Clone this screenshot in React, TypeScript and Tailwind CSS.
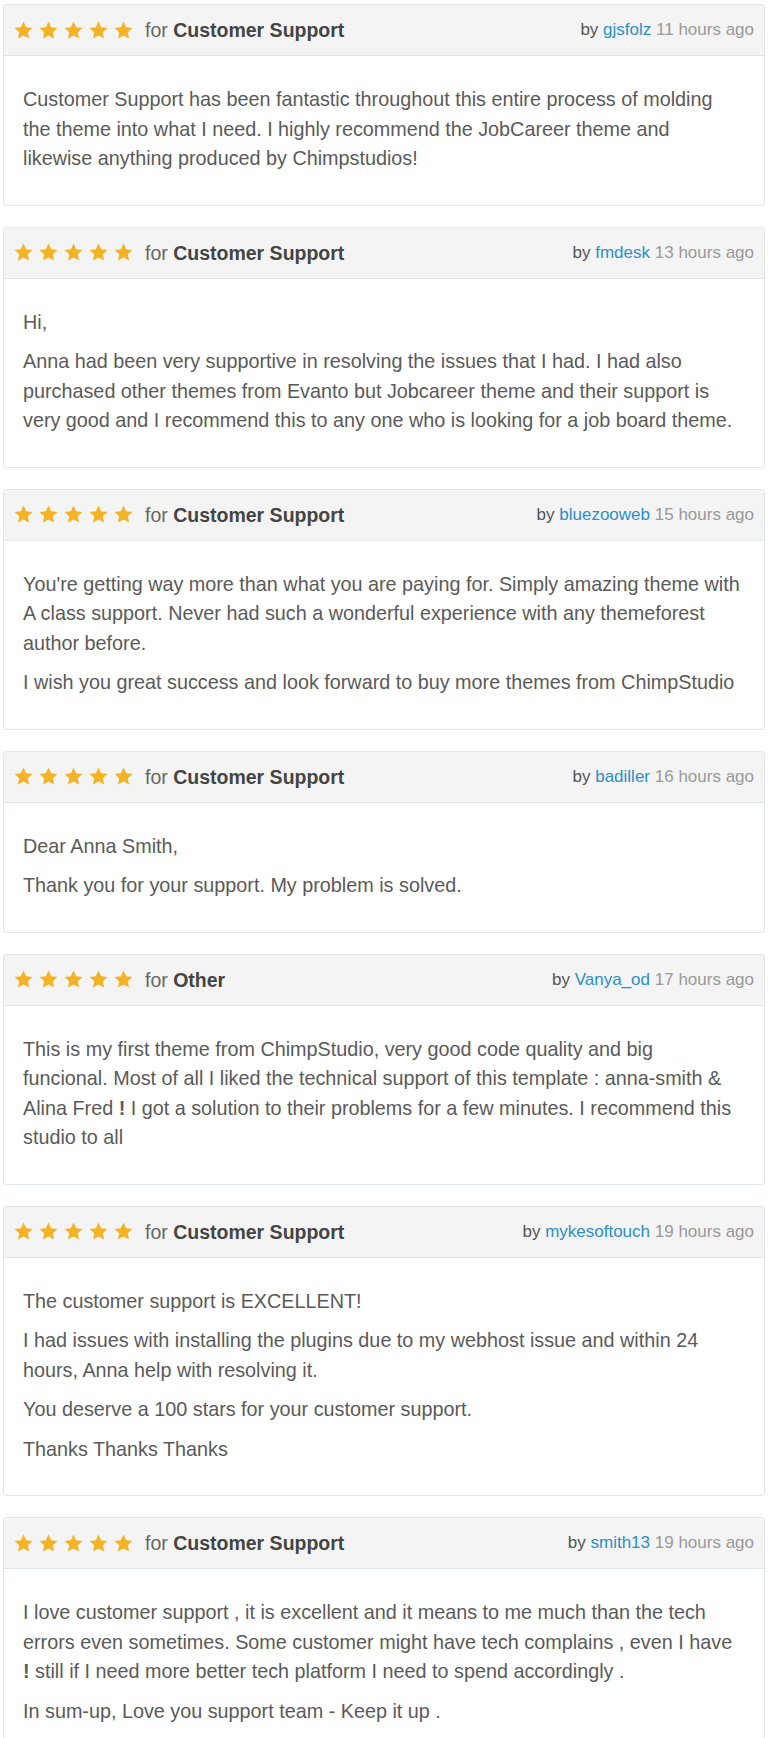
import { ReactNode } from "react"

interface Review {
  category: string
  author: string
  time: string
  body: ReactNode[]
}

const reviews: Review[] = [
  {
    category: "Customer Support",
    author: "gjsfolz",
    time: "11 hours ago",
    body: [
      "Customer Support has been fantastic throughout this entire process of molding the theme into what I need. I highly recommend the JobCareer theme and likewise anything produced by Chimpstudios!",
    ],
  },
  {
    category: "Customer Support",
    author: "fmdesk",
    time: "13 hours ago",
    body: [
      "Hi,",
      "Anna had been very supportive in resolving the issues that I had. I had also purchased other themes from Evanto but Jobcareer theme and their support is very good and I recommend this to any one who is looking for a job board theme.",
    ],
  },
  {
    category: "Customer Support",
    author: "bluezooweb",
    time: "15 hours ago",
    body: [
      "You're getting way more than what you are paying for. Simply amazing theme with A class support. Never had such a wonderful experience with any themeforest author before.",
      "I wish you great success and look forward to buy more themes from ChimpStudio",
    ],
  },
  {
    category: "Customer Support",
    author: "badiller",
    time: "16 hours ago",
    body: ["Dear Anna Smith,", "Thank you for your support. My problem is solved."],
  },
  {
    category: "Other",
    author: "Vanya_od",
    time: "17 hours ago",
    body: [
      <>
        This is my first theme from ChimpStudio, very good code quality and big funcional.
        Most of all I liked the technical support of this template : anna-smith &amp; Alina
        Fred <b className="font-bold">!</b> I got a solution to their problems for a few
        minutes. I recommend this studio to all
      </>,
    ],
  },
  {
    category: "Customer Support",
    author: "mykesoftouch",
    time: "19 hours ago",
    body: [
      "The customer support is EXCELLENT!",
      "I had issues with installing the plugins due to my webhost issue and within 24 hours, Anna help with resolving it.",
      "You deserve a 100 stars for your customer support.",
      "Thanks Thanks Thanks",
    ],
  },
  {
    category: "Customer Support",
    author: "smith13",
    time: "19 hours ago",
    body: [
      <>
        I love customer support , it is excellent and it means to me much than the tech
        errors even sometimes. Some customer might have tech complains , even I have{" "}
        <b className="font-bold">!</b> still if I need more better tech platform I need to
        spend accordingly .
      </>,
      "In sum-up, Love you support team - Keep it up .",
    ],
  },
]

function Star() {
  return (
    <svg viewBox="0 0 24 24" className="h-[21px] w-[21px]" fill="#f4b324">
      <path d="M12 1.8l3.05 6.6 7.2.82-5.36 4.9 1.47 7.1L12 17.6l-6.36 3.62 1.47-7.1-5.36-4.9 7.2-.82z" />
    </svg>
  )
}

function ReviewCard({ review }: { review: Review }) {
  return (
    <div className="mb-[21px] overflow-hidden rounded-[3px] border border-[#dfe5ea] bg-white">
      <div className="flex h-[51px] items-center justify-between border-b border-[#dfe5ea] bg-[#f4f4f4] pl-[9px] pr-[10px]">
        <div className="flex items-center">
          <div className="flex gap-[4px]">
            {[0, 1, 2, 3, 4].map((i) => (
              <Star key={i} />
            ))}
          </div>
          <span className="ml-[11px] text-[19.5px] leading-[24px] text-[#666]">
            for <b className="font-bold text-[#444]">{review.category}</b>
          </span>
        </div>
        <div className="text-[17px] leading-[22px] text-[#555]">
          by <span className="text-[#2b8fc8]">{review.author}</span>{" "}
          <span className="text-[#999]">{review.time}</span>
        </div>
      </div>
      <div className="pb-[21px] pl-[19px] pr-[24px] pt-[29px] text-[19.8px] leading-[29.5px] text-[#5a5a5a]">
        {review.body.map((p, i) => (
          <p key={i} className="mb-[10px]">
            {p}
          </p>
        ))}
      </div>
    </div>
  )
}

export default function App() {
  return (
    <div
      className="min-h-screen bg-white px-[3px] pt-[4px]"
      style={{ fontFamily: '"Liberation Sans", Arial, sans-serif' }}
    >
      {reviews.map((r) => (
        <ReviewCard key={r.author} review={r} />
      ))}
    </div>
  )
}
